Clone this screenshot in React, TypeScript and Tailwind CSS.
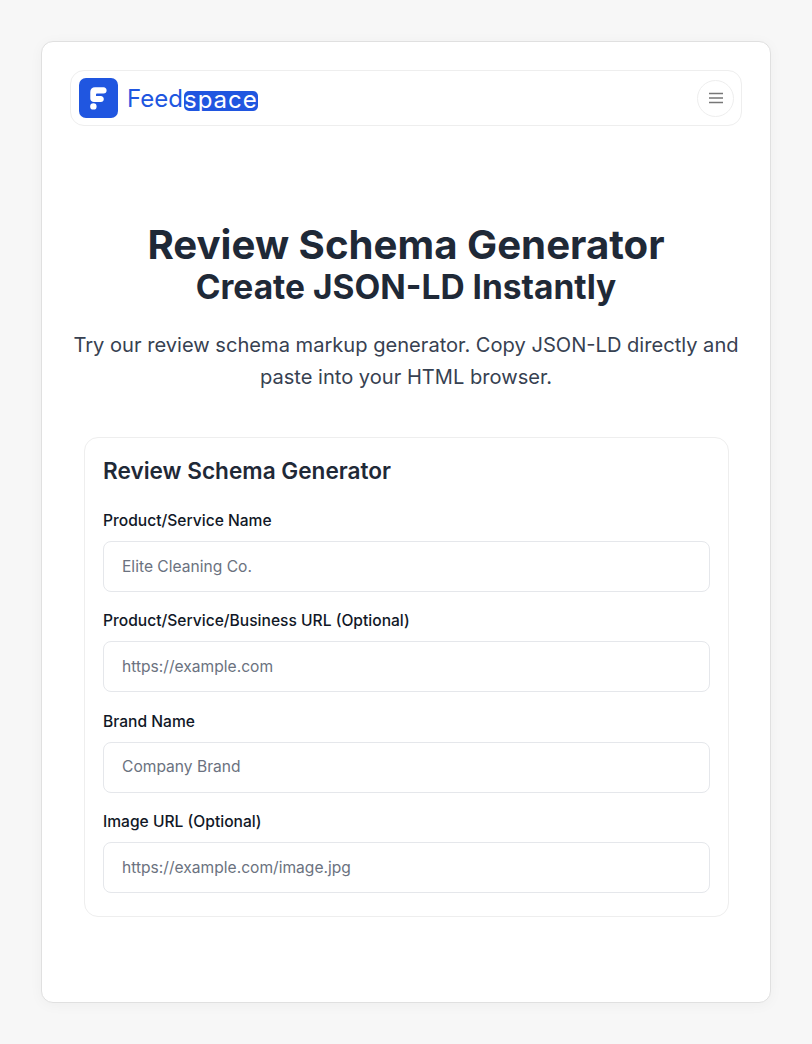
const fields = [
  { label: 'Product/Service Name', placeholder: 'Elite Cleaning Co.' },
  { label: 'Product/Service/Business URL (Optional)', placeholder: 'https://example.com' },
  { label: 'Brand Name', placeholder: 'Company Brand' },
  { label: 'Image URL (Optional)', placeholder: 'https://example.com/image.jpg' },
]

function Logo() {
  return (
    <div className="flex items-center gap-[9px]">
      <div className="w-[39px] h-[40px] rounded-[7px] bg-[#2056e0] flex items-center justify-center">
        <svg width="17" height="23" viewBox="0 0 17 23" fill="none">
          <path d="M0.3 5C0.3 2.2 2.2 0.3 5 0.3H13.6C15.4 0.3 16.6 1.6 16.6 3.4C16.6 5.2 15.4 6.5 13.6 6.5H7.2C6.5 6.5 6 7 6 7.7V8.9H10.8C12.6 8.9 13.8 10.2 13.8 12C13.8 13.8 12.6 15.1 10.8 15.1H4C1.8 15.1 0.3 13.6 0.3 11.6Z" fill="white" />
          <circle cx="3.4" cy="19.4" r="3.2" fill="white" />
        </svg>
      </div>
      <div className="flex items-center font-['Inter',sans-serif] text-[#2056e0] text-[24px] leading-none">
        <span className="mt-[2px]">Feed</span>
        <span className="ml-[1px] mt-[5px] h-[20px] w-[74px] rounded-[5px] bg-[#2056e0] text-center text-[24px] leading-[17px] tracking-[1px] text-white">space</span>
      </div>
    </div>
  )
}

export default function App() {
  return (
    <div className="w-[812px] h-[1044px] bg-[#f7f7f7] p-[41px] font-['Inter',sans-serif]">
      <div className="h-[962px] bg-white rounded-[12px] border border-[#e0e0e0] shadow-[0_2px_14px_rgba(0,0,0,0.04)] pt-[28px] px-[28px]">
        <header className="h-[56px] rounded-[14px] border border-[#eeeeee] flex items-center justify-between pl-[8px] pr-[7px]">
          <Logo />
          <button className="w-[37px] h-[37px] rounded-full border border-[#eeeeee] flex items-center justify-center">
            <svg width="16" height="16" viewBox="0 0 16 16" fill="none" stroke="#777" strokeWidth="1.7">
              <path d="M1 3.5H15M1 8H15M1 12.5H15" />
            </svg>
          </button>
        </header>

        <div className="mt-[97px] text-center">
          <h1 className="text-[40.2px] leading-[44px] font-bold text-[#1f2937]">Review Schema Generator</h1>
          <h2 className="text-[33.5px] leading-[41px] font-bold text-[#1f2937]">Create JSON-LD Instantly</h2>
          <p className="mt-[21px] text-[20.1px] leading-[32px] text-[#374151]">
            Try our review schema markup generator. Copy JSON-LD directly and paste into your HTML browser.
          </p>
        </div>

        <section className="mt-[44px] ml-[14px] mr-[13px] h-[480px] rounded-[14px] border border-[#eeeeee] pt-[19px] px-[18px]">
          <h3 className="text-[22.6px] leading-[28px] font-semibold text-[#1f2937]">Review Schema Generator</h3>
          <div className="mt-[24px] flex flex-col gap-[17.5px]">
            {fields.map(field => (
              <div key={field.label}>
                <label className="block text-[15.6px] leading-[24px] font-medium text-[#111827]">{field.label}</label>
                <div className="mt-[7.9px] h-[51px] rounded-[8px] border border-[#e5e7eb] flex items-center px-[18px] text-[15.6px] text-[#6b7280]">
                  {field.placeholder}
                </div>
              </div>
            ))}
          </div>
        </section>
      </div>
    </div>
  )
}
